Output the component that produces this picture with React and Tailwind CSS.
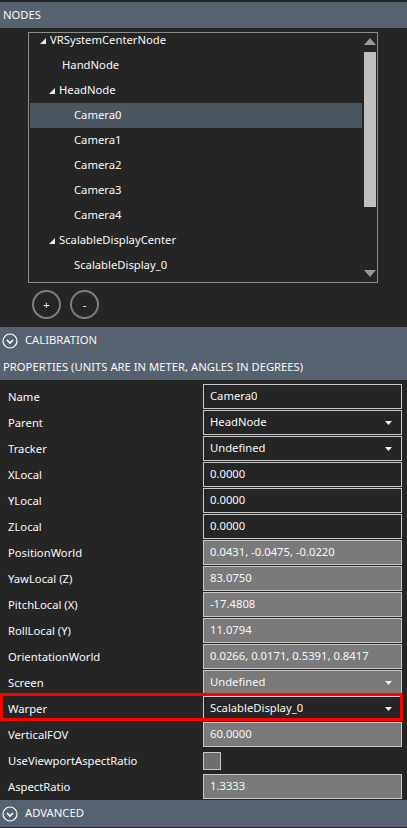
import React from "react";

const treeRows = [
  { label: "VRSystemCenterNode", level: 0, expander: true },
  { label: "HandNode", level: 1 },
  { label: "HeadNode", level: 1, expander: true },
  { label: "Camera0", level: 2, selected: true },
  { label: "Camera1", level: 2 },
  { label: "Camera2", level: 2 },
  { label: "Camera3", level: 2 },
  { label: "Camera4", level: 2 },
  { label: "ScalableDisplayCenter", level: 1, expander: true },
  { label: "ScalableDisplay_0", level: 2 },
];

const props = [
  { name: "Name", value: "Camera0", kind: "input" },
  { name: "Parent", value: "HeadNode", kind: "select" },
  { name: "Tracker", value: "Undefined", kind: "select" },
  { name: "XLocal", value: "0.0000", kind: "input" },
  { name: "YLocal", value: "0.0000", kind: "input" },
  { name: "ZLocal", value: "0.0000", kind: "input" },
  { name: "PositionWorld", value: "0.0431, -0.0475, -0.0220", kind: "readonly" },
  { name: "YawLocal (Z)", value: "83.0750", kind: "readonly" },
  { name: "PitchLocal (X)", value: "-17.4808", kind: "readonly" },
  { name: "RollLocal (Y)", value: "11.0794", kind: "readonly" },
  { name: "OrientationWorld", value: "0.0266, 0.0171, 0.5391, 0.8417", kind: "readonly" },
  { name: "Screen", value: "Undefined", kind: "readonlySelect" },
  { name: "Warper", value: "ScalableDisplay_0", kind: "select", highlight: true },
  { name: "VerticalFOV", value: "60.0000", kind: "readonly" },
  { name: "UseViewportAspectRatio", kind: "checkbox" },
  { name: "AspectRatio", value: "1.3333", kind: "readonly" },
];

const Expander = () => (
  <svg width="8" height="8" viewBox="0 0 8 8" className="mr-[3px] shrink-0">
    <polygon points="7,1 7,7 1,7" fill="#e6e6e6" />
  </svg>
);

const DropArrow = () => (
  <svg width="7" height="4" viewBox="0 0 7 4" className="shrink-0">
    <polygon points="0,0 7,0 3.5,4" fill="#f0f0f0" />
  </svg>
);

const CircleChevron = () => (
  <svg width="16" height="16" viewBox="0 0 16 16" className="shrink-0">
    <circle cx="8" cy="8" r="7" fill="none" stroke="#ffffff" strokeWidth="1.2" />
    <polyline points="5,7 8,10 11,7" fill="none" stroke="#ffffff" strokeWidth="1.6" />
  </svg>
);

const PropValue = ({ prop }) => {
  if (prop.kind === "checkbox") {
    return (
      <div className="h-full flex items-center">
        <div className="w-[18px] h-[18px] bg-[#6e6e6e] border border-[#c8c8c8]" />
      </div>
    );
  }
  const gray = prop.kind === "readonly" || prop.kind === "readonlySelect";
  const select = prop.kind === "select" || prop.kind === "readonlySelect";
  return (
    <div
      className={`h-[25px] border border-[#c8c8c8] flex items-center justify-between pl-[6px] pr-[9px] ${
        gray ? "bg-[#7a7a7a]" : "bg-[#252526]"
      }`}
    >
      <span className="truncate">{prop.value}</span>
      {select && <DropArrow />}
    </div>
  );
};

export default function App() {
  return (
    <div
      className="w-[407px] h-[828px] bg-[#252526] text-[#f8f8f8] text-[11.25px] overflow-hidden pt-[2px]"
      style={{ fontFamily: '"Noto Sans", "Open Sans", sans-serif' }}
    >
      {/* nodes */}
      <div className="h-[26px] bg-[#56626f] flex items-center px-[3px]">NODES</div>

      <div className="pl-[28px] pt-[4px]">
        <div className="w-[350px] h-[251px] border border-[#8c8c8c] flex overflow-hidden">
          <div className="flex-1 overflow-hidden pl-[1px]">
            <div className="-mt-[5px]">
              {treeRows.map((row) => (
                <div
                  key={row.label}
                  className={`h-[25px] flex items-center ${row.selected ? "bg-[#4b5661]" : ""}`}
                >
                  <div
                    className={`flex items-center ${
                      row.level === 0 ? "pl-[9px]" : row.level === 1 ? "pl-[18px]" : "pl-[44px]"
                    }`}
                  >
                    {row.expander && <Expander />}
                    {!row.expander && row.level === 1 && <span className="w-[14px]" />}
                    <span>{row.label}</span>
                  </div>
                </div>
              ))}
            </div>
          </div>
          {/* scrollbar */}
          <div className="w-[15px] flex flex-col items-center py-[5px]">
            <svg width="12" height="7" viewBox="0 0 12 7">
              <polygon points="0,7 12,7 6,0" fill="#9a9a9a" />
            </svg>
            <div className="w-[12px] h-[155px] bg-[#c0c0c0] mt-[7px]" />
            <div className="flex-1" />
            <svg width="12" height="7" viewBox="0 0 12 7">
              <polygon points="0,0 12,0 6,7" fill="#9a9a9a" />
            </svg>
          </div>
        </div>

        <div className="flex gap-[9px] pl-[4px] pt-[7px] h-[44px]">
          <button className="w-[29px] h-[29px] rounded-full border-2 border-[#7d7d7d] flex items-center justify-center text-[11px] leading-none text-white">
            +
          </button>
          <button className="w-[29px] h-[29px] rounded-full border-2 border-[#7d7d7d] flex items-center justify-center text-[11px] leading-none text-white">
            -
          </button>
        </div>
      </div>

      {/* calibration */}
      <div className="bg-[#56626f]">
        <div className="h-[27px] flex items-center gap-[7px] px-[2px]">
          <CircleChevron />
          <span>CALIBRATION</span>
        </div>
        <div className="h-[26px] flex items-center px-[3px]">
          PROPERTIES (UNITS ARE IN METER, ANGLES IN DEGREES)
        </div>
      </div>

      <div className="pt-[4px]">
        {props.map((prop) => (
          <div key={prop.name} className="relative h-[26px] flex">
            <div className="w-[203px] pl-[8px] flex items-center">{prop.name}</div>
            <div className="w-[199px]">
              <PropValue prop={prop} />
            </div>
            {prop.highlight && (
              <div className="absolute left-0 top-[-3px] w-[403px] h-[28px] border-[3px] border-[#ff0000]" />
            )}
          </div>
        ))}
      </div>

      {/* advanced */}
      <div className="h-[27px] bg-[#56626f] flex items-center gap-[7px] px-[2px]">
        <CircleChevron />
        <span>ADVANCED</span>
      </div>
    </div>
  );
}
